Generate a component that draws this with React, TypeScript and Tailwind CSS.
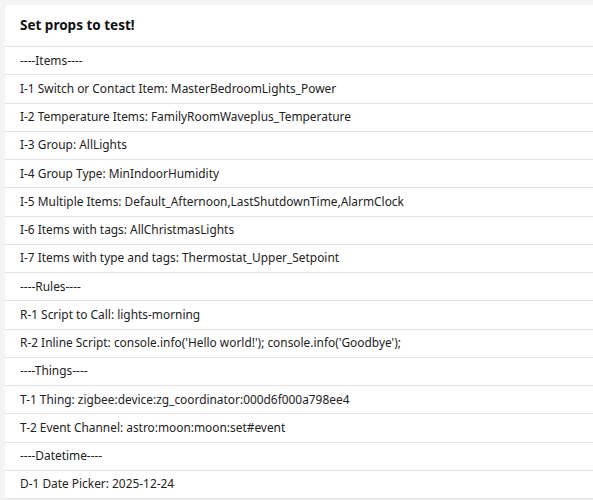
import React from "react";

const rows = [
  "----Items----",
  "I-1 Switch or Contact Item: MasterBedroomLights_Power",
  "I-2 Temperature Items: FamilyRoomWaveplus_Temperature",
  "I-3 Group: AllLights",
  "I-4 Group Type: MinIndoorHumidity",
  "I-5 Multiple Items: Default_Afternoon,LastShutdownTime,AlarmClock",
  "I-6 Items with tags: AllChristmasLights",
  "I-7 Items with type and tags: Thermostat_Upper_Setpoint",
  "----Rules----",
  "R-1 Script to Call: lights-morning",
  "R-2 Inline Script: console.info('Hello world!'); console.info('Goodbye');",
  "----Things----",
  "T-1 Thing: zigbee:device:zg_coordinator:000d6f000a798ee4",
  "T-2 Event Channel: astro:moon:moon:set#event",
  "----Datetime----",
  "D-1 Date Picker: 2025-12-24",
];

export default function App() {
  return (
    <div
      className="w-[593px] h-[500px] overflow-hidden bg-[#f3f4f6] pt-[5px] pl-[5px]"
      style={{ fontFamily: '"Noto Sans", "Open Sans", sans-serif' }}
    >
      <div className="bg-white rounded-tl-[5px] text-[#222222]">
        <div className="h-[42px] flex items-center pl-[15px] border-b border-[#e4e4e4]">
          <span className="text-[13.5px] font-bold text-[#111]">Set props to test!</span>
        </div>
        {rows.map((r, i) => (
          <div
            key={i}
            className="h-[28.25px] flex items-center pl-[15px] border-b border-[#e4e4e4] text-[11.9px] whitespace-nowrap"
          >
            {r}
          </div>
        ))}
      </div>
    </div>
  );
}
